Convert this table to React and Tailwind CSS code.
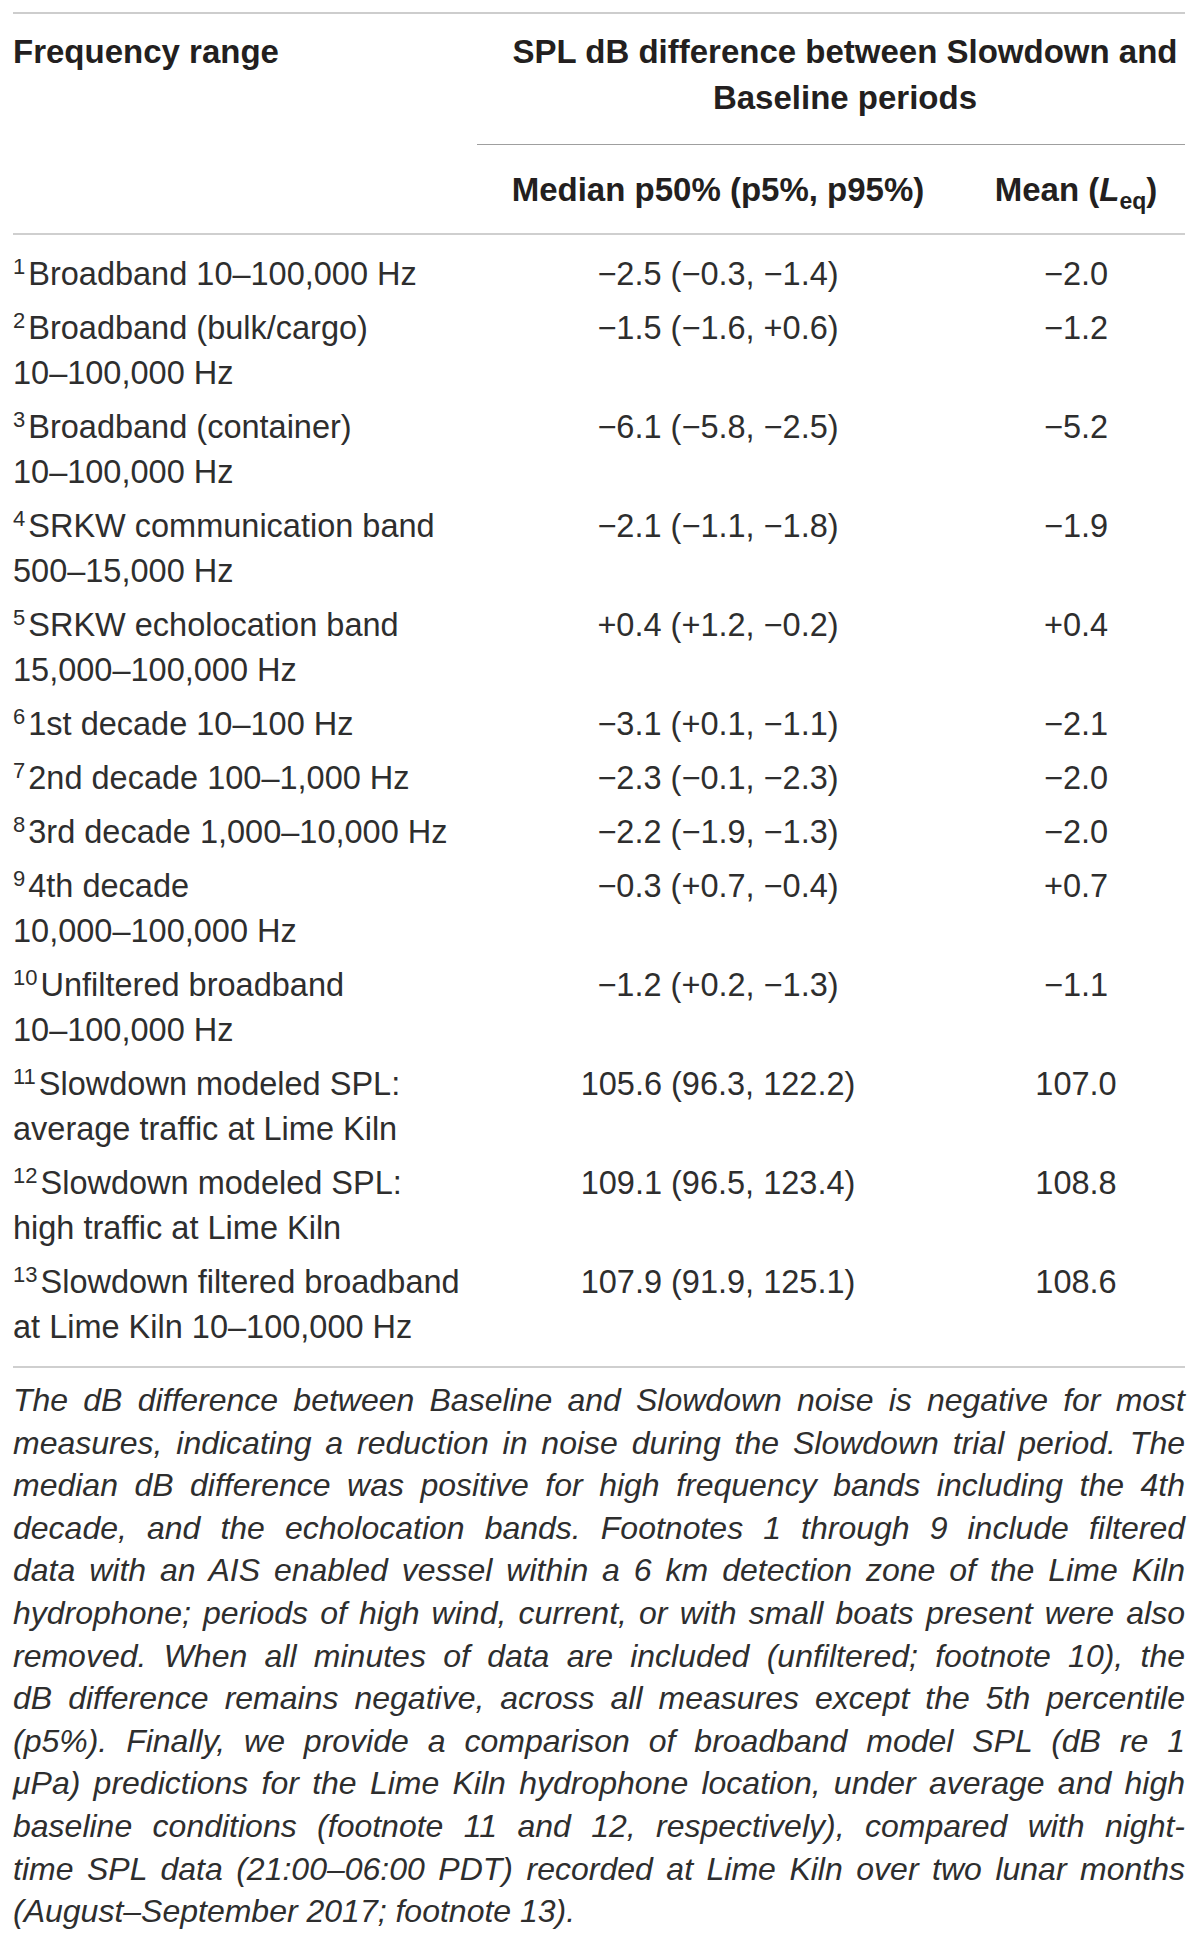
import React from "react";

const rows = [
  [["Broadband 10–100,000 Hz"], "−2.5 (−0.3, −1.4)", "−2.0"],
  [["Broadband (bulk/cargo)", "10–100,000 Hz"], "−1.5 (−1.6, +0.6)", "−1.2"],
  [["Broadband (container)", "10–100,000 Hz"], "−6.1 (−5.8, −2.5)", "−5.2"],
  [["SRKW communication band", "500–15,000 Hz"], "−2.1 (−1.1, −1.8)", "−1.9"],
  [["SRKW echolocation band", "15,000–100,000 Hz"], "+0.4 (+1.2, −0.2)", "+0.4"],
  [["1st decade 10–100 Hz"], "−3.1 (+0.1, −1.1)", "−2.1"],
  [["2nd decade 100–1,000 Hz"], "−2.3 (−0.1, −2.3)", "−2.0"],
  [["3rd decade 1,000–10,000 Hz"], "−2.2 (−1.9, −1.3)", "−2.0"],
  [["4th decade", "10,000–100,000 Hz"], "−0.3 (+0.7, −0.4)", "+0.7"],
  [["Unfiltered broadband", "10–100,000 Hz"], "−1.2 (+0.2, −1.3)", "−1.1"],
  [["Slowdown modeled SPL:", "average traffic at Lime Kiln"], "105.6 (96.3, 122.2)", "107.0"],
  [["Slowdown modeled SPL:", "high traffic at Lime Kiln"], "109.1 (96.5, 123.4)", "108.8"],
  [["Slowdown filtered broadband", "at Lime Kiln 10–100,000 Hz"], "107.9 (91.9, 125.1)", "108.6"],
];

const caption = [
  "The dB difference between Baseline and Slowdown noise is negative for most",
  "measures, indicating a reduction in noise during the Slowdown trial period. The",
  "median dB difference was positive for high frequency bands including the 4th",
  "decade, and the echolocation bands. Footnotes 1 through 9 include filtered",
  "data with an AIS enabled vessel within a 6 km detection zone of the Lime Kiln",
  "hydrophone; periods of high wind, current, or with small boats present were also",
  "removed. When all minutes of data are included (unfiltered; footnote 10), the",
  "dB difference remains negative, across all measures except the 5th percentile",
  "(p5%). Finally, we provide a comparison of broadband model SPL (dB re 1",
  "μPa) predictions for the Lime Kiln hydrophone location, under average and high",
  "baseline conditions (footnote 11 and 12, respectively), compared with night-",
  "time SPL data (21:00–06:00 PDT) recorded at Lime Kiln over two lunar months",
  "(August–September 2017; footnote 13).",
];

export default function App() {
  return (
    <div className="w-[1200px] min-h-[1939px] bg-white font-['Liberation_Sans',Arial,sans-serif] text-[#231f20]">
      <div className="ml-[13px] w-[1172px] pt-[12px]">
        {/* Header */}
        <div className="grid grid-cols-[464px_482px_226px] border-t-2 border-b-2 border-t-[#cdcdcd] border-b-[#cfcfcf] font-bold text-[33px] leading-[46px]">
          <div className="row-span-2 pt-[15px] whitespace-nowrap">Frequency range</div>
          <div className="col-span-2 pt-[15px] pb-[23px] pl-[28px] text-center border-b border-[#9f9f9f] whitespace-nowrap">
            SPL dB difference between Slowdown and
            <br />
            Baseline periods
          </div>
          <div className="pt-[22px] pb-[17px] text-center whitespace-nowrap">Median p50% (p5%, p95%)</div>
          <div className="pt-[22px] pb-[17px] pl-[8px] text-center whitespace-nowrap">
            Mean (<span className="italic">L</span>
            <span className="relative top-[8px] text-[23px]">eq</span>)
          </div>
        </div>

        {/* Body */}
        <div className="pt-[13px] pb-[11px] border-b-2 border-[#cfcfcf] text-[32.5px] leading-[45px] text-[#2e2e2e]">
          {rows.map(([label, median, mean], i) => (
            <div key={i} className="grid grid-cols-[464px_482px_226px] pt-[4px] pb-[5px]">
              <div className="whitespace-nowrap">
                {label.map((line, j) => (
                  <div key={j}>
                    {j === 0 && (
                      <span className="relative -top-[11px] mr-[3px] text-[22px] leading-none">{i + 1}</span>
                    )}
                    {line}
                  </div>
                ))}
              </div>
              <div className="text-center whitespace-nowrap">{median}</div>
              <div className="pl-[8px] text-center whitespace-nowrap">{mean}</div>
            </div>
          ))}
        </div>

        {/* Caption */}
        <div className="pt-[11px] italic text-[32px] leading-[42.6px] text-[#2e2e2e]">
          {caption.map((line, i) => (
            <div
              key={i}
              className={
                i === caption.length - 1
                  ? "text-left whitespace-nowrap"
                  : "text-justify [text-align-last:justify] whitespace-nowrap"
              }
            >
              {line}
            </div>
          ))}
        </div>
      </div>
    </div>
  );
}
